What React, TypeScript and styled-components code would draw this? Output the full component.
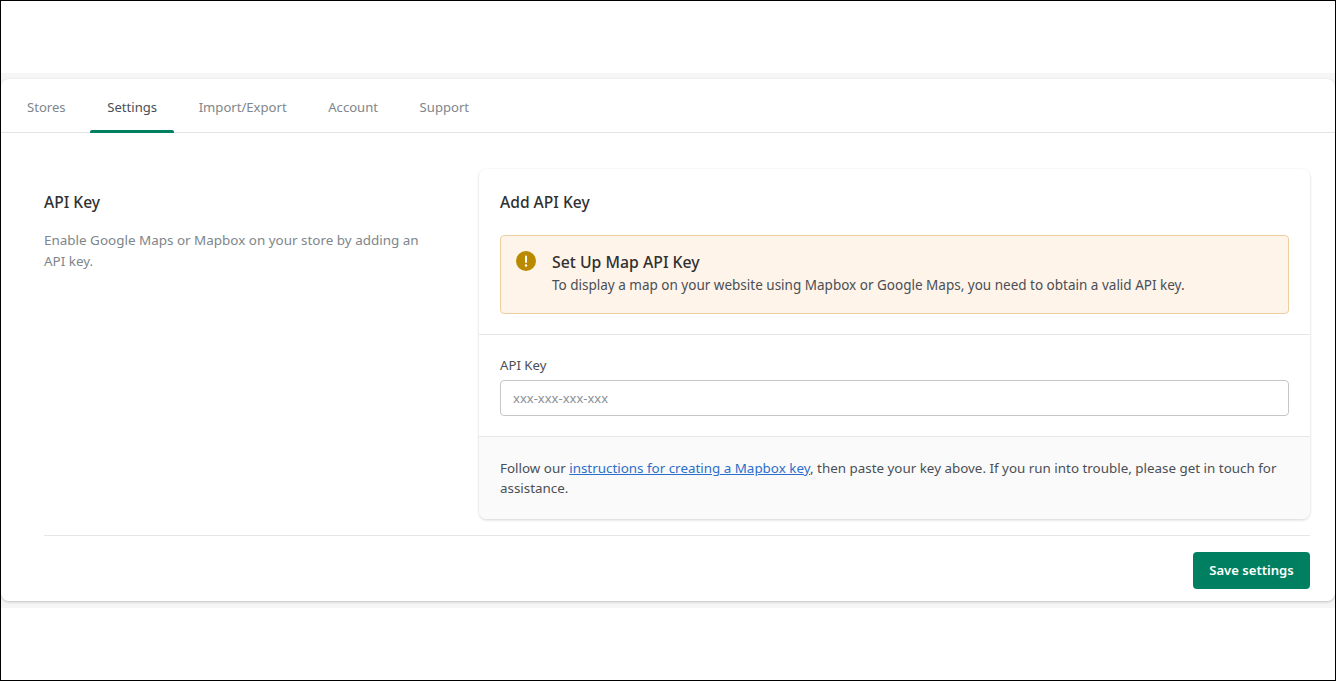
import React from "react";
import styled, { createGlobalStyle } from "styled-components";

const GlobalStyle = createGlobalStyle`
  html, body {
    margin: 0;
    padding: 0;
    background: #fff;
  }
  * {
    box-sizing: border-box;
  }
  body {
    font-family: "Noto Sans", "Open Sans", sans-serif;
    color: #303030;
  }
`;

const Frame = styled.div`
  width: 1336px;
  height: 681px;
  border: 1px solid #000;
  padding-top: 72px;
  background: #fff;
  overflow: hidden;
`;

const Band = styled.div`
  background: #f6f6f7;
  padding: 6px 0 7px;
`;

const Card = styled.main`
  height: 522px;
  background: #fff;
  border-radius: 8px;
  box-shadow: 0 1px 3px rgba(0, 0, 0, 0.22);
`;

const Tabs = styled.nav`
  display: flex;
  gap: 7.6px;
  height: 54px;
  padding-left: 9px;
  border-bottom: 1px solid #e3e3e3;
`;

const Tab = styled.a<{ $active?: boolean }>`
  position: relative;
  display: flex;
  align-items: center;
  padding: 2px 17px 0;
  font-size: 13.1px;
  color: ${(p) => (p.$active ? "#4a4f55" : "#80868b")};

  ${(p) =>
    p.$active &&
    `
    &::after {
      content: "";
      position: absolute;
      left: 0;
      right: 0;
      bottom: -1px;
      height: 3px;
      background: #008060;
      border-radius: 2px 2px 0 0;
    }
  `}
`;

const Body = styled.div`
  padding: 36px 25px 0 43px;
`;

const Columns = styled.section`
  display: flex;
  justify-content: space-between;
  padding-bottom: 16px;
  border-bottom: 1px solid #e6e6e6;
`;

const Intro = styled.div`
  width: 385px;
  padding-top: 22px;
`;

const SectionTitle = styled.h2`
  margin: 0 0 17px;
  font-size: 15.6px;
  line-height: 22px;
  font-weight: 500;
  color: #303030;
`;

const PanelTitle = styled(SectionTitle)`
  margin-bottom: 22px;
`;

const IntroText = styled.p`
  margin: 0;
  font-size: 13.45px;
  line-height: 21px;
  color: #80868b;
`;

const Panel = styled.div`
  width: 831px;
  height: 350px;
  display: flex;
  flex-direction: column;
  background: #fff;
  border-radius: 8px;
  box-shadow: 0 1px 3px rgba(0, 0, 0, 0.18);
  overflow: hidden;
`;

const PanelTop = styled.div`
  height: 166px;
  padding: 22px 21px 0;
  border-bottom: 1px solid #e6e6e6;
`;

const Banner = styled.div`
  display: flex;
  gap: 16px;
  height: 79px;
  padding: 14px 15px;
  background: #fff4e9;
  border: 1px solid #edcf9f;
  border-radius: 4px;
`;

const BannerIcon = styled.svg`
  flex: none;
  width: 20px;
  height: 20px;
  margin-top: 1px;
`;

const BannerBody = styled.div`
  display: flex;
  flex-direction: column;
`;

const BannerTitle = styled.strong`
  font-size: 15.8px;
  line-height: 24px;
  font-weight: 500;
  color: #303030;
`;

const BannerText = styled.span`
  font-size: 13.5px;
  line-height: 22px;
  color: #4a4f55;
`;

const Field = styled.div`
  height: 102px;
  padding: 20px 21px 0;
  border-bottom: 1px solid #e6e6e6;
`;

const Label = styled.label`
  display: block;
  margin-bottom: 4px;
  font-size: 13.2px;
  line-height: 21px;
  color: #4a4f55;
`;

const Input = styled.input`
  display: block;
  width: 100%;
  height: 36px;
  padding: 0 12px;
  font-family: inherit;
  font-size: 13px;
  background: #fff;
  border: 1px solid #c4c7ca;
  border-radius: 4px;

  &::placeholder {
    color: #8c9196;
  }
`;

const PanelFooter = styled.div`
  flex: 1;
  padding: 21px 21px 0;
  background: #fafafa;
  font-size: 13.4px;
  line-height: 20px;
  color: #4a4f55;
`;

const Link = styled.a`
  color: #2c6ecb;
  text-decoration: underline;
`;

const Actions = styled.div`
  display: flex;
  justify-content: flex-end;
  padding-top: 16px;
`;

const SaveButton = styled.button`
  width: 117px;
  height: 37px;
  padding: 0 0 1px;
  font-family: inherit;
  font-size: 13.1px;
  font-weight: 600;
  color: #fff;
  background: #008060;
  border: none;
  border-radius: 4px;
`;

const tabs = ["Stores", "Settings", "Import/Export", "Account", "Support"];

const App: React.FC = () => {
  return (
    <Frame>
      <GlobalStyle />
      <Band>
        <Card>
          <Tabs>
            {tabs.map((tab) => (
              <Tab key={tab} $active={tab === "Settings"}>
                {tab}
              </Tab>
            ))}
          </Tabs>
          <Body>
            <Columns>
              <Intro>
                <SectionTitle>API Key</SectionTitle>
                <IntroText>
                  Enable Google Maps or Mapbox on your store by adding an API key.
                </IntroText>
              </Intro>
              <Panel>
                <PanelTop>
                  <PanelTitle>Add API Key</PanelTitle>
                  <Banner>
                    <BannerIcon viewBox="0 0 20 20">
                      <circle cx="10" cy="10" r="10" fill="#b98900" />
                      <rect x="9" y="4.5" width="2" height="7.5" rx="1" fill="#fff" />
                      <circle cx="10" cy="14.5" r="1.2" fill="#fff" />
                    </BannerIcon>
                    <BannerBody>
                      <BannerTitle>Set Up Map API Key</BannerTitle>
                      <BannerText>
                        To display a map on your website using Mapbox or Google Maps, you need to obtain a valid API key.
                      </BannerText>
                    </BannerBody>
                  </Banner>
                </PanelTop>
                <Field>
                  <Label>API Key</Label>
                  <Input placeholder="xxx-xxx-xxx-xxx" />
                </Field>
                <PanelFooter>
                  Follow our <Link>instructions for creating a Mapbox key</Link>, then paste your key above. If you run into trouble, please get in touch for assistance.
                </PanelFooter>
              </Panel>
            </Columns>
            <Actions>
              <SaveButton>Save settings</SaveButton>
            </Actions>
          </Body>
        </Card>
      </Band>
    </Frame>
  );
};

export default App;
